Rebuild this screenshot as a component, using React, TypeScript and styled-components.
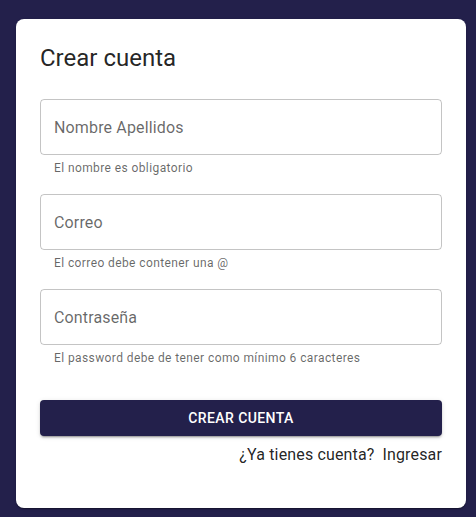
import React from "react";
import styled, { createGlobalStyle } from "styled-components";

const Global = createGlobalStyle`
  html, body { margin: 0; padding: 0; background: #23204b; }
  body { font-family: Roboto, "Liberation Sans", Arial, sans-serif; }
  * { box-sizing: border-box; }
`;

const Page = styled.div`
  min-height: 517px;
  padding: 19px 10px 9px 16px;
  background: #23204b;
`;

const Card = styled.div`
  width: 450px;
  background: #ffffff;
  border-radius: 8px;
  padding: 23px 24px 41px;
  display: flex;
  flex-direction: column;
  box-shadow: 0px 2px 1px -1px rgba(0,0,0,0.2), 0px 1px 1px 0px rgba(0,0,0,0.14), 0px 1px 3px 0px rgba(0,0,0,0.12);
`;

const Title = styled.h1`
  margin: 0 0 25px;
  font-size: 24px;
  font-weight: 400;
  line-height: 32px;
  color: rgba(0, 0, 0, 0.87);
`;

const Form = styled.form`
  display: flex;
  flex-direction: column;
  gap: 16px;
`;

const Field = styled.div`
  display: flex;
  flex-direction: column;
`;

const Input = styled.input`
  height: 56px;
  width: 100%;
  border: 1px solid rgba(0, 0, 0, 0.23);
  border-radius: 4px;
  padding: 0 13px;
  font-family: inherit;
  font-size: 16px;
  letter-spacing: 0.15px;
  color: rgba(0, 0, 0, 0.87);
  background: transparent;
  outline: none;
  &::placeholder {
    color: rgba(0, 0, 0, 0.6);
    opacity: 1;
  }
`;

const Helper = styled.p`
  margin: 3px 14px 0;
  font-size: 12px;
  line-height: 20px;
  letter-spacing: 0.4px;
  color: rgba(0, 0, 0, 0.6);
`;

const Button = styled.button`
  margin-top: 32px;
  height: 36px;
  width: 100%;
  border: none;
  border-radius: 4px;
  background: #23204b;
  color: #ffffff;
  font-family: inherit;
  font-size: 14px;
  font-weight: 500;
  letter-spacing: 0.4px;
  text-transform: uppercase;
  box-shadow: 0px 3px 1px -2px rgba(0,0,0,0.2), 0px 2px 2px 0px rgba(0,0,0,0.14), 0px 1px 5px 0px rgba(0,0,0,0.12);
  cursor: pointer;
`;

const Footer = styled.div`
  margin-top: 7px;
  display: flex;
  justify-content: flex-end;
  gap: 8px;
  font-size: 16px;
  line-height: 24px;
  letter-spacing: 0.15px;
  color: rgba(0, 0, 0, 0.87);
`;

const LinkText = styled.a`
  color: inherit;
  text-decoration: none;
`;

const fields = [
  { placeholder: "Nombre Apellidos", type: "text", help: "El nombre es obligatorio" },
  { placeholder: "Correo", type: "email", help: "El correo debe contener una @" },
  { placeholder: "Contraseña", type: "password", help: "El password debe de tener como mínimo 6 caracteres" },
];

export default function App() {
  return (
    <>
      <Global />
      <Page>
        <Card>
          <Title>Crear cuenta</Title>
          <Form onSubmit={(e) => e.preventDefault()}>
            {fields.map((f) => (
              <Field key={f.placeholder}>
                <Input type={f.type} placeholder={f.placeholder} />
                <Helper>{f.help}</Helper>
              </Field>
            ))}
          </Form>
          <Button type="button">Crear cuenta</Button>
          <Footer>
            <span>¿Ya tienes cuenta?</span>
            <LinkText href="#">Ingresar</LinkText>
          </Footer>
        </Card>
      </Page>
    </>
  );
}
